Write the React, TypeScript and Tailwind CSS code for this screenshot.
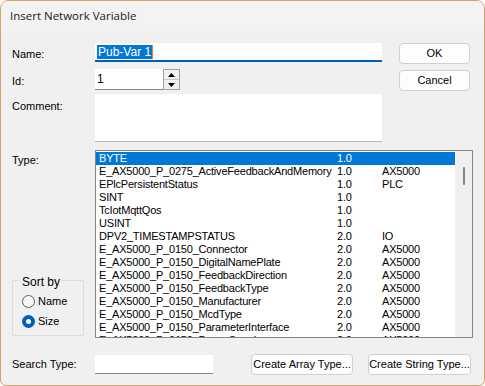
import React from "react";

// Insert Network Variable dialog (Windows 11 style)

const rows: [string, string, string][] = [
  ["BYTE", "1.0", ""],
  ["E_AX5000_P_0275_ActiveFeedbackAndMemory", "1.0", "AX5000"],
  ["EPlcPersistentStatus", "1.0", "PLC"],
  ["SINT", "1.0", ""],
  ["TcIotMqttQos", "1.0", ""],
  ["USINT", "1.0", ""],
  ["DPV2_TIMESTAMPSTATUS", "2.0", "IO"],
  ["E_AX5000_P_0150_Connector", "2.0", "AX5000"],
  ["E_AX5000_P_0150_DigitalNamePlate", "2.0", "AX5000"],
  ["E_AX5000_P_0150_FeedbackDirection", "2.0", "AX5000"],
  ["E_AX5000_P_0150_FeedbackType", "2.0", "AX5000"],
  ["E_AX5000_P_0150_Manufacturer", "2.0", "AX5000"],
  ["E_AX5000_P_0150_McdType", "2.0", "AX5000"],
  ["E_AX5000_P_0150_ParameterInterface", "2.0", "AX5000"],
  ["E_AX5000_P_0150_PowerSupply", "2.0", "AX5000"],
];

function Button({ label, w }: { label: string; w: string }) {
  return (
    <div
      className={`${w} h-[21px] flex items-center justify-center rounded-[4px] border border-[#d0d0d0] bg-[#fdfdfd] text-[11px] text-black whitespace-nowrap`}
    >
      {label}
    </div>
  );
}

function Radio({ label, checked }: { label: string; checked?: boolean }) {
  return (
    <div className="flex items-center gap-[3px] h-[20px]">
      {checked ? (
        <span className="w-[13px] h-[13px] rounded-full bg-[#005fb8] flex items-center justify-center">
          <span className="w-[5px] h-[5px] rounded-full bg-white" />
        </span>
      ) : (
        <span className="w-[13px] h-[13px] rounded-full border border-[#5d5d5d] bg-[#f7f7f7]" />
      )}
      <span>{label}</span>
    </div>
  );
}

export default function App() {
  return (
    <div
      className="w-[485px] h-[386px] bg-white"
      style={{ fontFamily: '"Liberation Sans", Arial, sans-serif' }}
    >
      <div className="w-full h-full flex flex-col rounded-t-[8px] rounded-b-[6px] border border-[#d4a26c] bg-[#f0f0f0] overflow-hidden text-[11px] text-black">
        {/* title bar */}
        <div
          className="h-[30px] shrink-0 bg-[#f3f3f3] flex items-center pl-[9px] text-[11.5px] text-[#1a1a1a]"
          style={{ fontFamily: '"Open Sans", "Noto Sans", sans-serif' }}
        >
          Insert Network Variable
        </div>

        <div className="flex-1 flex flex-col pl-[11px] pt-[12px]">
          {/* Name */}
          <div className="flex items-start h-[21px]">
            <div className="w-[83px] pt-[3px]">Name:</div>
            <div className="w-[287px] h-[19px] bg-white border-b-2 border-[#005fb8] flex items-center pl-[2px] rounded-t-[2px]">
              <span className="bg-[#0078d7] text-white leading-[14px] px-[1px] text-[12px]">Pub-Var 1</span>
              <span className="w-[1px] h-[14px] bg-[#f08020]" />
            </div>
            <div className="ml-[17px]">
              <Button label="OK" w="w-[71px]" />
            </div>
          </div>

          {/* Id */}
          <div className="flex items-start mt-[5px] h-[21px]">
            <div className="w-[83px] pt-[4px]">Id:</div>
            <div className="w-[68px] h-[21px] bg-white border-b border-[#8a8a8a] flex items-center pl-[2px] text-[12px]">
              1
            </div>
            <div className="w-[17px] h-[21px] border border-[#a0a0a0] bg-[#f0f0f0] flex flex-col">
              <div className="flex-1 flex items-center justify-center border-b border-[#c8c8c8]">
                <svg width="7" height="4" viewBox="0 0 7 4">
                  <path d="M3.5 0L7 4H0z" fill="#000" />
                </svg>
              </div>
              <div className="flex-1 flex items-center justify-center">
                <svg width="7" height="4" viewBox="0 0 7 4">
                  <path d="M0 0h7L3.5 4z" fill="#000" />
                </svg>
              </div>
            </div>
            <div className="ml-[219px] mt-[1px]">
              <Button label="Cancel" w="w-[71px]" />
            </div>
          </div>

          {/* Comment */}
          <div className="flex items-start mt-[4px]">
            <div className="w-[83px] pt-[4px]">Comment:</div>
            <div className="w-[287px] h-[48px] bg-white border-b border-[#b8b8b8]" />
          </div>

          {/* Type */}
          <div className="flex items-stretch mt-[8px] h-[188px]">
            <div className="w-[83px] flex flex-col justify-between">
              <div className="pt-[2px]">Type:</div>
              <div className="relative w-[72px] h-[56px] border border-[#dcdcdc] rounded-[2px] mb-[2px] pt-[10px] pl-[9px]">
                <span className="absolute -top-[8px] left-[7px] bg-[#f0f0f0] px-[2px] text-[12px]">Sort by</span>
                <Radio label="Name" />
                <Radio label="Size" checked />
              </div>
            </div>
            <div className="w-[378px] h-[188px] border border-[#828790] bg-white flex overflow-hidden">
              <div className="flex-1 overflow-hidden pt-[1px] text-[11px] tracking-[-0.2px]">
                {rows.map(([n, s, g], i) => (
                  <div
                    key={n}
                    className={`flex h-[13px] leading-[13px] pl-[3px] ${i === 0 ? "bg-[#0078d7] text-white" : ""}`}
                  >
                    <span className="w-[238px] shrink-0 whitespace-nowrap overflow-hidden">{n}</span>
                    <span className="w-[45px] shrink-0">{s}</span>
                    <span>{g}</span>
                  </div>
                ))}
              </div>
              <div className="w-[17px] shrink-0 bg-[#f0f0f0] flex justify-center pt-[16px]">
                <div className="w-[2px] h-[18px] rounded bg-[#858585]" />
              </div>
            </div>
          </div>

          {/* bottom row */}
          <div className="flex items-center mt-[16px]">
            <div className="w-[83px] whitespace-nowrap">Search Type:</div>
            <div className="w-[118px] h-[19px] bg-white border-b border-[#8a8a8a]" />
            <div className="ml-[38px]">
              <Button label="Create Array Type..." w="w-[102px]" />
            </div>
            <div className="ml-[15px]">
              <Button label="Create String Type..." w="w-[103px]" />
            </div>
          </div>
        </div>
      </div>
    </div>
  );
}
